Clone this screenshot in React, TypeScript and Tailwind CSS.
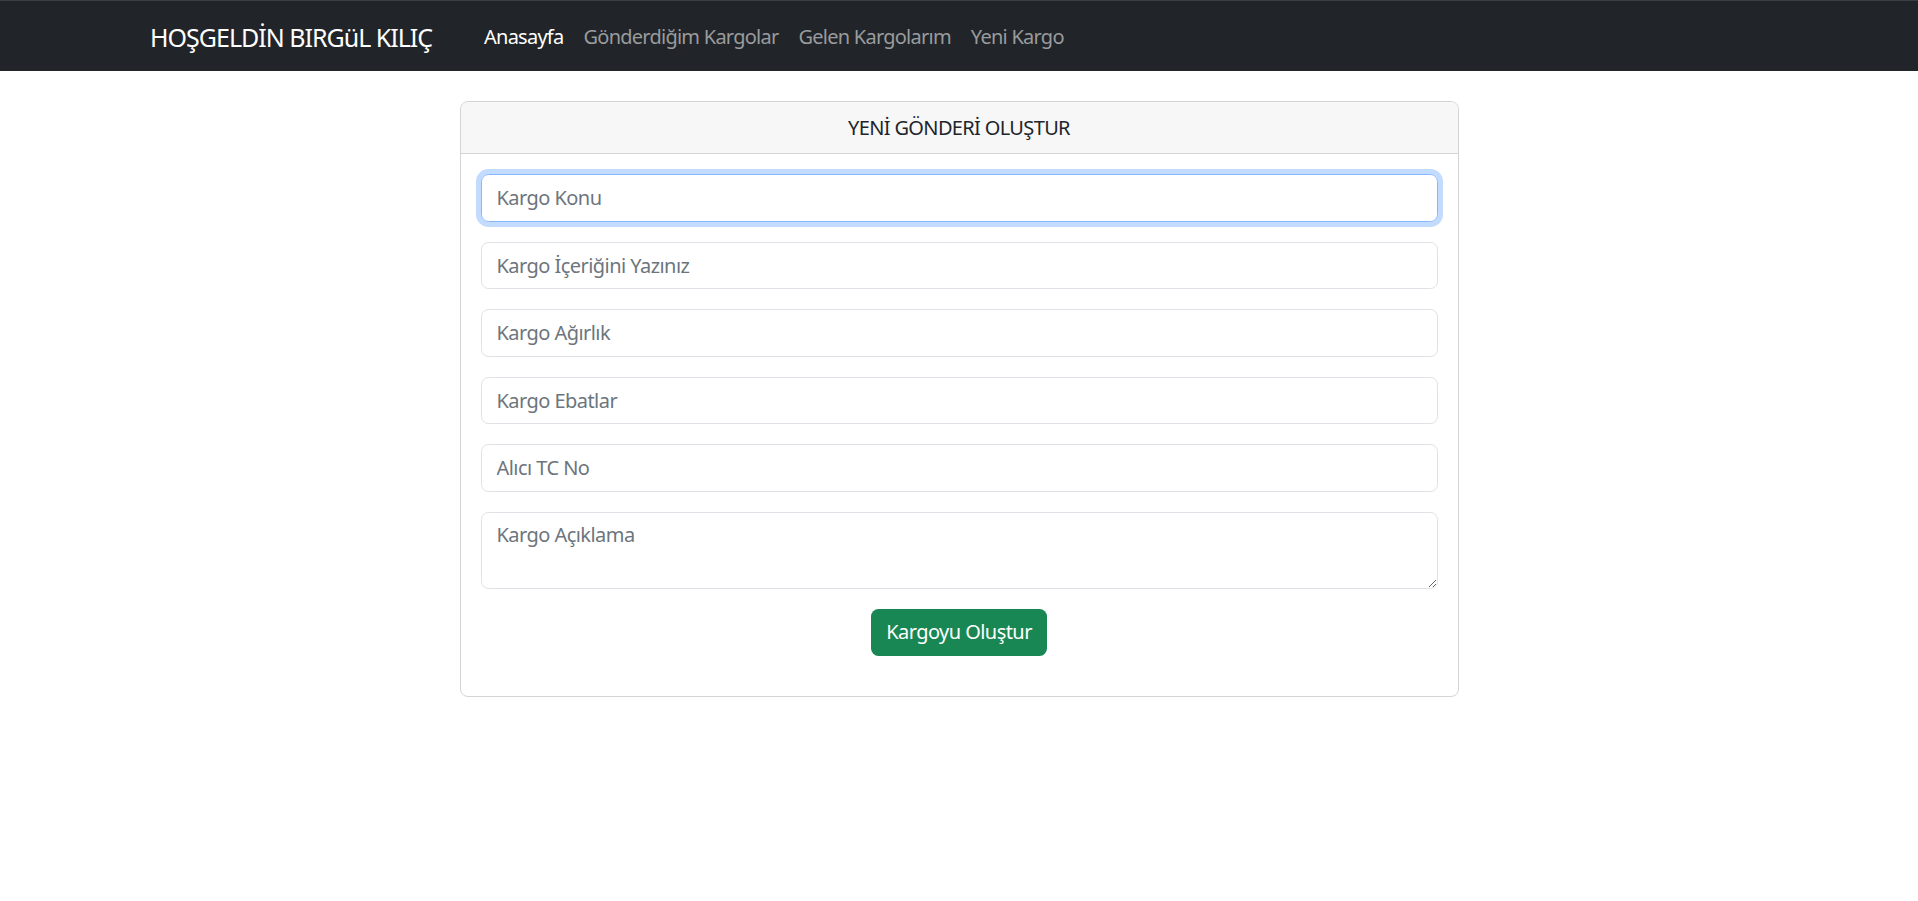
import { useState } from 'react';

const NAV_LINKS = [
  { id: 'home', label: 'Anasayfa', active: true },
  { id: 'sent', label: 'Gönderdiğim Kargolar', active: false },
  { id: 'incoming', label: 'Gelen Kargolarım', active: false },
  { id: 'new', label: 'Yeni Kargo', active: false },
];

const FIELDS = [
  { id: 'konu', placeholder: 'Kargo Konu' },
  { id: 'icerik', placeholder: 'Kargo İçeriğini Yazınız' },
  { id: 'agirlik', placeholder: 'Kargo Ağırlık' },
  { id: 'ebat', placeholder: 'Kargo Ebatlar' },
  { id: 'alici', placeholder: 'Alıcı TC No' },
];

export default function App() {
  const [values, setValues] = useState<Record<string, string>>({});
  const [note, setNote] = useState('');

  return (
    <div className="min-h-screen bg-white text-[#212529] font-['Noto_Sans','Open_Sans',sans-serif]">
      {/* Navbar */}
      <nav className="bg-[#212529] h-[71px] border-t border-[#3a3d41]">
        <div className="flex items-center h-full pl-[150px] pt-[2px]">
          <a href="#" className="w-[324px] text-[25px] leading-[37px] text-white tracking-[-1px]">
            HOŞGELDİN BIRGüL KILIÇ
          </a>
          <ul className="flex items-center">
            {NAV_LINKS.map((l) => (
              <li key={l.id}>
                <a
                  href="#"
                  className={`block px-[10px] text-[20px] leading-[30px] tracking-[-0.75px] ${l.active ? 'text-white' : 'text-[#9a9b9d]'}`}
                >
                  {l.label}
                </a>
              </li>
            ))}
          </ul>
        </div>
      </nav>

      {/* Card */}
      <div className="w-[999px] mx-auto mt-[30px] border border-[#d3d4d5] rounded-[8px] overflow-hidden">
        <div className="bg-[#f7f7f7] border-b border-[#d3d4d5] h-[52px] flex items-center justify-center text-[20px] tracking-[-0.65px]">
          YENİ GÖNDERİ OLUŞTUR
        </div>
        <div className="px-[20px] pt-[20px] pb-[40px] flex flex-col gap-[20px]">
          {FIELDS.map((f, i) => (
            <input
              key={f.id}
              type="text"
              value={values[f.id] ?? ''}
              onChange={(e) => setValues({ ...values, [f.id]: e.target.value })}
              placeholder={f.placeholder}
              className={`w-full h-[47.5px] px-[15px] text-[20px] rounded-[7.5px] border outline-none placeholder-[#6c757d] tracking-[-0.55px] ${i === 0 ? 'border-[#86b7fe] shadow-[0_0_0_5px_rgba(13,110,253,0.25)]' : 'border-[#dee2e6]'}`}
            />
          ))}
          <textarea
            rows={2}
            value={note}
            onChange={(e) => setNote(e.target.value)}
            placeholder="Kargo Açıklama"
            className="w-full h-[77px] px-[15px] py-[7px] text-[20px] leading-[30px] rounded-[7.5px] border border-[#dee2e6] outline-none placeholder-[#6c757d] tracking-[-0.55px]"
          />
          <div className="flex justify-center">
            <button className="bg-[#198754] text-white text-[20px] h-[47px] px-[15px] rounded-[7.5px] tracking-[-0.55px]">
              Kargoyu Oluştur
            </button>
          </div>
        </div>
      </div>
    </div>
  );
}
